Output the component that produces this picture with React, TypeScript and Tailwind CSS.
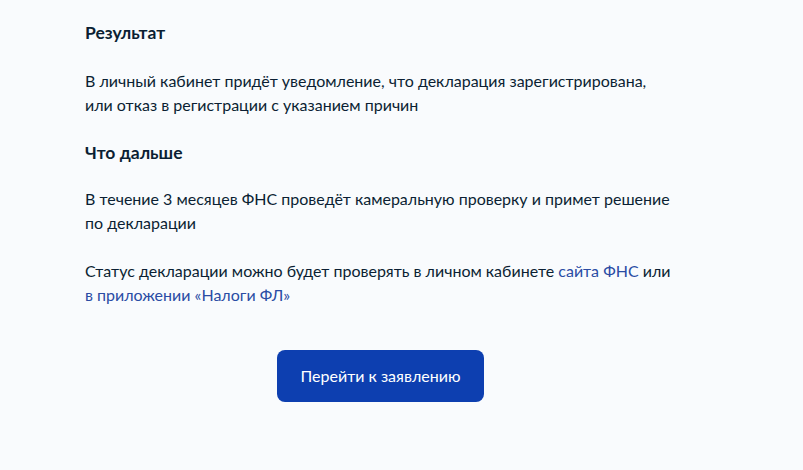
export default function App() {
  return (
    <div
      className="w-[803px] h-[470px] bg-[#f9fbfd] text-[#0b1f33] overflow-hidden"
      style={{ fontFamily: "Lato, 'Noto Sans', sans-serif" }}
    >
      <div className="pl-[85px] pt-[21px]">
        <h2 className="text-[17.5px] leading-[24px] font-bold">Результат</h2>
        <p className="mt-[24px] text-[16px] leading-[24px]">
          В личный кабинет придёт уведомление, что декларация зарегистрирована,
          <br />
          или отказ в регистрации с указанием причин
        </p>
        <h2 className="mt-[24px] text-[17.5px] leading-[24px] font-bold">Что дальше</h2>
        <p className="mt-[22px] text-[16px] leading-[24px]">
          В течение 3 месяцев ФНС проведёт камеральную проверку и примет решение
          <br />
          по декларации
        </p>
        <p className="mt-[24px] text-[16px] leading-[24px]">
          Статус декларации можно будет проверять в личном кабинете{" "}
          <a className="text-[#2a4ca4]">сайта ФНС</a> или
          <br />
          <a className="text-[#2a4ca4]">в приложении «Налоги ФЛ»</a>
        </p>
      </div>
      <div className="flex pl-[277px] mt-[43px]">
        <button className="w-[207px] h-[52px] rounded-[8px] bg-[#0d3fb0] text-white text-[16px]">
          Перейти к заявлению
        </button>
      </div>
    </div>
  );
}
